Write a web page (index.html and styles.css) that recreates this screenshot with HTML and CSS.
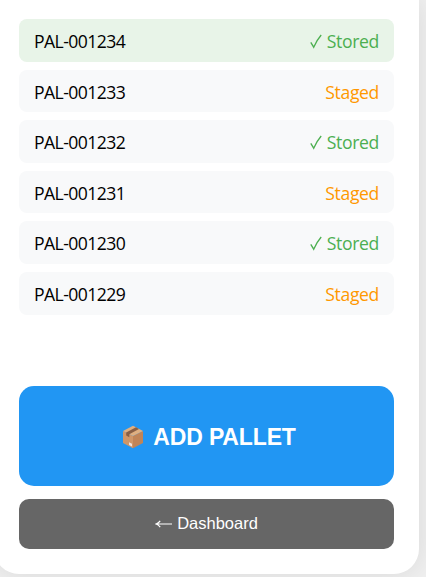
FILE: index.html
```html
<!DOCTYPE html>
<html lang="en">
<head>
<meta charset="utf-8">
<title>Pallets</title>
<link rel="stylesheet" href="styles.css">
</head>
<body>
<svg class="defs" width="0" height="0" aria-hidden="true">
  <symbol id="check" viewBox="0 0 12 15"><path d="M.8 8.4 3.7 13.2Q6.5 6.5 11.2 1" fill="none" stroke="currentColor" stroke-width="1.3"/></symbol>
</svg>
<main class="card">
  <ul class="list">
    <li class="row latest"><span class="code">PAL-001234</span><span class="status stored"><svg class="check"><use href="#check"/></svg>Stored</span></li>
    <li class="row"><span class="code">PAL-001233</span><span class="status staged">Staged</span></li>
    <li class="row"><span class="code">PAL-001232</span><span class="status stored"><svg class="check"><use href="#check"/></svg>Stored</span></li>
    <li class="row"><span class="code">PAL-001231</span><span class="status staged">Staged</span></li>
    <li class="row"><span class="code">PAL-001230</span><span class="status stored"><svg class="check"><use href="#check"/></svg>Stored</span></li>
    <li class="row"><span class="code">PAL-001229</span><span class="status staged">Staged</span></li>
  </ul>
  <button class="btn add">
    <svg class="box" viewBox="0 0 22 24">
      <path d="M1 6 11 11V23.3L1 18z" fill="#cf9668"/>
      <path d="M11 11 21 6V18L11 23.3z" fill="#c08457"/>
      <path d="M1 6 11 .7 21 6 11 11z" fill="#dfaf80"/>
      <path d="M4.2 7.6 14 2.3 17 3.9 7.3 9.2V12.2L4.2 10.6z" fill="#895f45"/>
      <path d="M7 17.3 10 18.8V21.5L7 20z" fill="#eee0dc"/>
    </svg><span>ADD PALLET</span>
  </button>
  <button class="btn back">
    <svg class="arrow" viewBox="0 0 17 10"><path d="M17 5H1.2M5.2 1.8Q3.5 4.2 1 5 3.5 5.8 5.2 8.2" fill="none" stroke="#fff" stroke-width="1.2"/></svg><span>Dashboard</span>
  </button>
</main>
</body>
</html>
```
FILE: styles.css
```css
* { box-sizing: border-box; }
body {
  margin: 0;
  height: 577px;
  overflow: hidden;
  background: #f0f0f0;
  font-family: "Segoe UI", "Open Sans", "Noto Sans", sans-serif;
}
.defs { display: none; }
.card {
  width: 425px;
  height: 574px;
  margin-left: -6px;
  padding: 19px 25px 25px;
  background: #fff;
  border-radius: 0 0 25px 25px;
  box-shadow: 0 0 30px rgba(0, 0, 0, .1);
  display: flex;
  flex-direction: column;
}
.list {
  list-style: none;
  margin: 0 0 71.4px;
  padding: 0;
  display: flex;
  flex-direction: column;
  gap: 8px;
}
.row {
  display: flex;
  justify-content: space-between;
  align-items: center;
  height: 42.6px;
  padding: 2.2px 15px 0;
  border-radius: 8px;
  background: #f8f9fa;
  font-size: 17.6px;
  line-height: 22.6px;
  color: #000;
}
.latest { background: #e8f4e8; }
.code { letter-spacing: -.56px; }
.status { display: flex; align-items: center; letter-spacing: -.36px; }
.stored { color: #4caf50; }
.staged { color: #ff9800; }
.check { width: 12px; height: 15px; margin-right: 4.5px; }
.btn {
  flex: none;
  display: flex;
  align-items: center;
  justify-content: center;
  border: 0;
  padding: 0;
  color: #fff;
  font-family: "Liberation Sans", Arial, sans-serif;
}
.add {
  height: 100px;
  margin-bottom: 13px;
  padding: 3px 0 0 5px;
  border-radius: 15px;
  background: #2196f3;
  font-size: 23px;
  font-weight: 700;
  letter-spacing: -.15px;
}
.box { width: 22px; height: 24px; margin-right: 9px; }
.back {
  height: 50px;
  border-radius: 10px;
  background: #666;
  font-size: 16.5px;
}
.arrow { width: 17px; height: 10px; margin-right: 5px; }
```
